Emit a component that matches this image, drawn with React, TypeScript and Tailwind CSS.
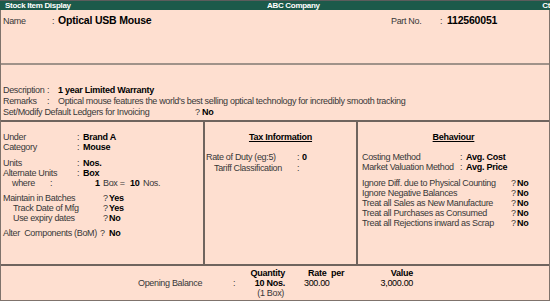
import React from "react";

const Lbl: React.FC<{ w: string; className?: string; children?: React.ReactNode }> = ({ w, className = "", children }) => (
  <span className={`shrink-0 whitespace-nowrap ${w} ${className}`}>{children}</span>
);

const Val: React.FC<{ children: React.ReactNode }> = ({ children }) => (
  <span className="whitespace-nowrap font-bold text-[9px] tracking-[-0.25px] text-black">{children}</span>
);

export default function App() {
  const behaviour = [
    "Ignore Diff. due to Physical Counting",
    "Ignore Negative Balances",
    "Treat all Sales as New Manufacture",
    "Treat all Purchases as Consumed",
    "Treat all Rejections inward as Scrap",
  ];

  return (
    <div className="w-[550px] h-[301px] bg-[#fedfd0] flex flex-col overflow-hidden font-['Liberation_Sans',Arial,sans-serif] text-[9px] tracking-[-0.33px] text-[#383838]">
      {/* title bar */}
      <div className="h-[10px] shrink-0 flex bg-[#1c5a4a] border-t border-[#5c5c5c] text-white font-bold text-[8px] tracking-[-0.3px] leading-[9px]">
        <span className="w-[267px] shrink-0 pl-[5px]">Stock Item Display</span>
        <span className="shrink-0">ABC Company</span>
        <span className="ml-auto shrink-0">Ct</span>
      </div>

      <div className="flex-1 flex flex-col border-x border-b border-[#7f736c]">
        {/* name */}
        <div className="h-[53px] shrink-0 pt-[3px] flex items-baseline leading-[14px]">
          <Lbl w="w-[51px]" className="pl-[2px]">Name</Lbl>
          <Lbl w="w-[6px]">:</Lbl>
          <span className="w-[333px] shrink-0 font-bold text-[10.5px] tracking-[-0.2px] text-black">Optical USB Mouse</span>
          <Lbl w="w-[49px]">Part No.</Lbl>
          <Lbl w="w-[7px]">:</Lbl>
          <span className="font-bold text-[10.5px] tracking-[-0.2px] text-black">112560051</span>
        </div>
        <div className="h-[2px] shrink-0 bg-[#a09289]" />

        {/* description */}
        <div className="h-[55px] shrink-0 pt-[20px] flex flex-col leading-[11px]">
          <div className="flex items-baseline">
            <Lbl w="w-[46px]" className="pl-[2px]">Description</Lbl>
            <Lbl w="w-[11px]">:</Lbl>
            <Val>1 year Limited Warranty</Val>
          </div>
          <div className="flex items-baseline">
            <Lbl w="w-[46px]" className="pl-[2px]">Remarks</Lbl>
            <Lbl w="w-[11px]">:</Lbl>
            <span className="whitespace-nowrap">
              Optical mouse features the world's best selling optical technology for incredibly smooth tracking
            </span>
          </div>
          <div className="flex items-baseline">
            <Lbl w="w-[194px]" className="pl-[2px]">Set/Modify Default Ledgers for Invoicing</Lbl>
            <Lbl w="w-[7px]">?</Lbl>
            <Val>No</Val>
          </div>
        </div>
        <div className="h-[2px] shrink-0 bg-[#6f645e]" />

        {/* three columns */}
        <div className="h-[142px] shrink-0 flex leading-[10px]">
          <div className="w-[204px] shrink-0 border-r-2 border-[#6f645e] pt-[10px] flex flex-col">
            <div className="flex items-baseline">
              <Lbl w="w-[76px]" className="pl-[2px]">Under</Lbl>
              <Lbl w="w-[6px]">:</Lbl>
              <Val>Brand A</Val>
            </div>
            <div className="flex items-baseline">
              <Lbl w="w-[76px]" className="pl-[2px]">Category</Lbl>
              <Lbl w="w-[6px]">:</Lbl>
              <Val>Mouse</Val>
            </div>
            <div className="flex items-baseline mt-[6px]">
              <Lbl w="w-[76px]" className="pl-[2px]">Units</Lbl>
              <Lbl w="w-[6px]">:</Lbl>
              <Val>Nos.</Val>
            </div>
            <div className="flex items-baseline">
              <Lbl w="w-[76px]" className="pl-[2px]">Alternate Units</Lbl>
              <Lbl w="w-[6px]">:</Lbl>
              <Val>Box</Val>
            </div>
            <div className="flex items-baseline">
              <Lbl w="w-[49px]" className="pl-[11px]">where</Lbl>
              <Lbl w="w-[45px]">:</Lbl>
              <Lbl w="w-[8px]" className="font-bold text-black">1</Lbl>
              <Lbl w="w-[27px]">Box =</Lbl>
              <Lbl w="w-[13px]" className="font-bold text-black">10</Lbl>
              <span>Nos.</span>
            </div>
            <div className="flex items-baseline mt-[5px]">
              <Lbl w="w-[102px]" className="pl-[2px]">Maintain in Batches</Lbl>
              <Lbl w="w-[6px]">?</Lbl>
              <Val>Yes</Val>
            </div>
            <div className="flex items-baseline">
              <Lbl w="w-[102px]" className="pl-[12px]">Track Date of Mfg</Lbl>
              <Lbl w="w-[6px]">?</Lbl>
              <Val>Yes</Val>
            </div>
            <div className="flex items-baseline">
              <Lbl w="w-[102px]" className="pl-[12px]">Use expiry dates</Lbl>
              <Lbl w="w-[6px]">?</Lbl>
              <Val>No</Val>
            </div>
            <div className="flex items-baseline mt-[5px]">
              <Lbl w="w-[99px]" className="pl-[2px]">Alter&nbsp; Components&nbsp;(BoM)</Lbl>
              <Lbl w="w-[9px]">?</Lbl>
              <Val>No</Val>
            </div>
          </div>

          <div className="w-[153px] shrink-0 border-r-2 border-[#6f645e] pt-[10px] flex flex-col">
            <div className="text-center font-bold tracking-[-0.25px] text-black underline underline-offset-1">Tax Information</div>
            <div className="flex items-baseline mt-[10px] leading-[11px]">
              <Lbl w="w-[92px]" className="pl-[1px]">Rate of Duty (eg:5)</Lbl>
              <Lbl w="w-[5px]">:</Lbl>
              <Val>0</Val>
            </div>
            <div className="flex items-baseline leading-[11px]">
              <Lbl w="w-[92px]" className="pl-[9px]">Tariff Classification</Lbl>
              <Lbl w="w-[5px]">:</Lbl>
            </div>
          </div>

          <div className="flex-1 pt-[10px] flex flex-col">
            <div className="text-center font-bold tracking-[-0.25px] text-black underline underline-offset-1">Behaviour</div>
            <div className="flex items-baseline mt-[10px]">
              <Lbl w="w-[102px]" className="pl-[4px]">Costing Method</Lbl>
              <Lbl w="w-[6px]">:</Lbl>
              <Val>Avg. Cost</Val>
            </div>
            <div className="flex items-baseline">
              <Lbl w="w-[102px]" className="pl-[4px]">Market Valuation Method</Lbl>
              <Lbl w="w-[6px]">:</Lbl>
              <Val>Avg. Price</Val>
            </div>
            <div className="mt-[6px] flex flex-col">
              {behaviour.map((b) => (
                <div key={b} className="flex items-baseline">
                  <Lbl w="w-[153px]" className="pl-[4px]">{b}</Lbl>
                  <Lbl w="w-[6px]">?</Lbl>
                  <Val>No</Val>
                </div>
              ))}
            </div>
          </div>
        </div>
        <div className="h-[2px] shrink-0 bg-[#6f645e]" />

        {/* opening balance */}
        <div className="flex-1 pt-[2px] flex flex-col leading-[10px]">
          <div className="flex items-baseline font-bold tracking-[-0.25px] text-black">
            <Lbl w="w-[242px]" />
            <Lbl w="w-[42px]" className="text-right">Quantity</Lbl>
            <Lbl w="w-[23px]" />
            <Lbl w="w-[46px]">Rate&nbsp; per</Lbl>
            <Lbl w="w-[59px]" className="text-right">Value</Lbl>
          </div>
          <div className="flex items-baseline">
            <Lbl w="w-[137px]" />
            <Lbl w="w-[95px]">Opening Balance</Lbl>
            <Lbl w="w-[10px]">:</Lbl>
            <Lbl w="w-[42px]" className="text-right font-bold tracking-[-0.25px] text-black">10 Nos.</Lbl>
            <Lbl w="w-[19px]" />
            <Lbl w="w-[50px]" className="text-black">300.00</Lbl>
            <Lbl w="w-[59px]" className="text-right text-black">3,000.00</Lbl>
          </div>
          <div className="flex items-baseline">
            <Lbl w="w-[242px]" />
            <Lbl w="w-[41px]" className="text-right">(1 Box)</Lbl>
          </div>
        </div>
      </div>
    </div>
  );
}
